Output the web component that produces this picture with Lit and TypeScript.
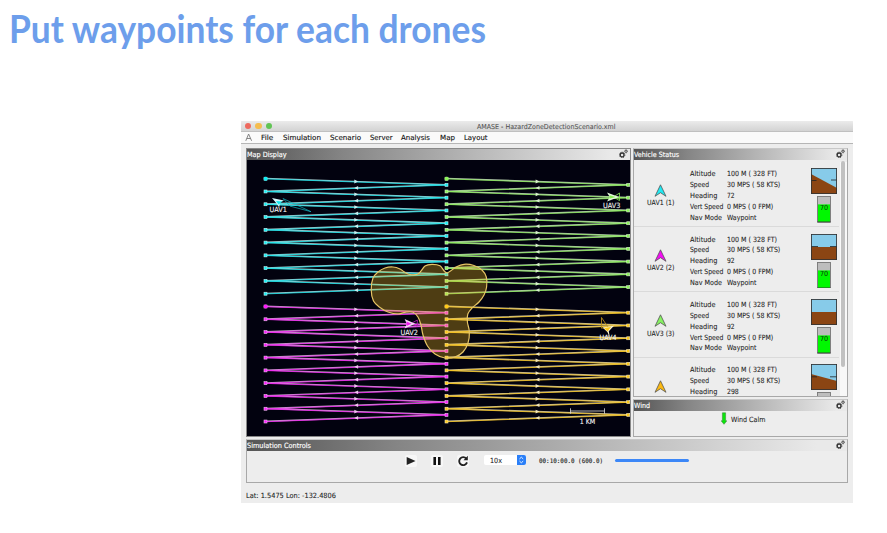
import { LitElement, html, svg, css, nothing } from "lit";
import { customElement } from "lit/decorators.js";

/** A line of small text set to a fixed advance width. */
const label = (text: string, width: number, cls = "", size = 7.2) => html`<svg
  class="label ${cls}" width=${width} height="10" viewBox="0 0 ${width} 10">
  <text x="0" y="7.6" font-size=${size} textLength=${width} lengthAdjust="spacingAndGlyphs">${text}</text>
</svg>`;

const gears = html`<svg class="gears" width="9" height="9" viewBox="0 0 9 9">
  <circle cx="3.1" cy="5.9" r="1.9" fill="none" stroke="#333" stroke-width="1.3"/>
  <circle cx="3.1" cy="5.9" r="2.8" fill="none" stroke="#333" stroke-width=".7" stroke-dasharray="1.2 1"/>
  <circle cx="7" cy="2.3" r="1.1" fill="none" stroke="#444" stroke-width=".9"/>
  <circle cx="7" cy="2.3" r="1.7" fill="none" stroke="#444" stroke-width=".5" stroke-dasharray=".8 .7"/>
</svg>`;

const STEP = 12.78;

interface Route { id: string; x1: number; x2: number; y: number; color: string; pale: string }
const routes: Route[] = [
  { id: "r1", x1: 265.6, x2: 446.6, y: 178.7, color: "#12eef4", pale: "#c6eff0" },
  { id: "r2", x1: 446.6, x2: 628.3, y: 178.7, color: "#8cf45a", pale: "#d6efca" },
  { id: "r3", x1: 265.6, x2: 446.6, y: 306.5, color: "#fb1cfb", pale: "#efc2f0" },
  { id: "r4", x1: 446.6, x2: 628.3, y: 306.5, color: "#ffca18", pale: "#f3e6b8" },
];

function drawRoute(r: Route) {
  const pts: [number, number][] = [];
  for (let i = 0; i < 10; i++) {
    pts.push([r.x1, r.y + i * STEP]);
    if (i < 9) pts.push([r.x2, r.y + 6.2 + i * STEP]);
  }
  const line = pts.map((p) => p.join(",")).join(" ");
  const mid = (r.x1 + r.x2) / 2;
  return svg`
    <polyline points=${line} fill="none" stroke=${r.pale} stroke-width="1.4" opacity=".8" transform="translate(0 -.3)"/>
    <polyline points=${line} fill="none" stroke=${r.color} stroke-width="1" opacity=".75" transform="translate(0 .2)"/>
    ${pts.slice(1).map((p, i) => {
      const y = (p[1] + pts[i][1]) / 2 - 0.3;
      const d = i % 2 === 0
        ? `M${mid - 1.8} ${y - 1.9}l3.8 1.9l-3.8 1.9z`
        : `M${mid + 2} ${y - 1.9}l-3.8 1.9l3.8 1.9z`;
      return svg`<path d=${d} fill=${r.pale}/>`;
    })}
    ${pts.map((p) => svg`<rect x=${p[0] - 1.6} y=${p[1] - 1.5} width="3" height="3" fill=${r.color} stroke=${r.pale} stroke-width=".6"/>`)}
    <circle cx=${r.x1} cy=${r.y} r="2" fill=${r.color}/>`;
}

const zone: [number, number][] = [
  [371.2, 290], [373, 278], [378, 272], [385, 268], [393, 267], [400, 269], [408, 274], [418, 274],
  [425, 266], [432, 264.3], [440, 265.8], [446.6, 272.8], [456, 267], [464, 264.3], [474, 265.5],
  [482, 270], [486.3, 277], [486.6, 287], [484, 295], [479, 302], [472, 308], [467.8, 314],
  [467.4, 322], [469.4, 332], [468, 343], [463, 352], [455, 357], [445, 358], [435, 354],
  [427.5, 346], [423, 335], [421, 325], [418, 317], [413, 312.3], [405, 312.3], [398, 314],
  [388, 312], [380, 307.5], [373.5, 301],
];

/** Closed Catmull-Rom curve through the zone's corners. */
function smooth(p: [number, number][]) {
  const n = p.length;
  let d = `M${p[0]}`;
  for (let i = 0; i < n; i++) {
    const a = p[(i + n - 1) % n], b = p[i], c = p[(i + 1) % n], e = p[(i + 2) % n];
    d += `C${b[0] + (c[0] - a[0]) / 6} ${b[1] + (c[1] - a[1]) / 6} ${c[0] - (e[0] - b[0]) / 6} ${c[1] - (e[1] - b[1]) / 6} ${c[0]} ${c[1]}`;
  }
  return d + "z";
}

const mapText = (t: string, x: number, y: number, w: number) =>
  svg`<text x=${x} y=${y} font-size="7.2" fill="#f2f2f2" stroke="#f2f2f2" stroke-width=".12" textLength=${w} lengthAdjust="spacingAndGlyphs">${t}</text>`;

@customElement("mission-map")
class MissionMap extends LitElement {
  static styles = css`
    :host { display: block; flex: 1; background: #02020f; }
    svg { display: block; font-family: "DejaVu Sans", sans-serif; }
  `;
  render() {
    return html`<svg width="383" height="276" viewBox="247 160 383 276">
      ${routes.map(drawRoute)}
      <path d=${smooth(zone)} fill="#ffc81e" fill-opacity=".3" stroke="#e6c565" stroke-width="1.2"/>
      <path d="M283 198.5l28 13.2l-21-5.6z" fill="none" stroke="#12b4c0" stroke-width=".7"/>
      <path d="M272 198l12 2.600l-4 2l-.8 4.600l-2.600-3.600z" fill="#d6f7fa"/>
      <path d="M276 201l6.500 .4l-4 3z" fill="#12e6ee"/>
      ${mapText("UAV1", 269.5, 212.2, 17.5)}
      <path d="M619.5 193v7.6l-6-3.6z" fill="none" stroke="#86ee55" stroke-width=".8"/>
      <path d="M607 192.4l12 4.6l-12 4.6l2.8-4.6z" fill="#e4f8da"/>
      <path d="M609.5 195.2l6 1.8l-6 1.8z" fill="#86ee55"/>
      ${mapText("UAV3", 603, 207.8, 17.5)}
      <path d="M417.3 320v6l-7-2z" fill="none" stroke="#b316b3" stroke-width=".9"/>
      <path d="M404.6 319l10.600 4.700l-10.600 4.700l2.200-4.700z" fill="#f6d9f6"/>
      <path d="M406.500 321.500l5 2.200l-5 2.200z" fill="#f41cf4"/>
      ${mapText("UAV2", 400.5, 334.6, 17.5)}
      <path d="M601.5 317.5l6.500 9.700l-6.500 1z" fill="none" stroke="#b48a1a" stroke-width=".9"/>
      ${mapText("UAV4", 599.5, 339.6, 17)}
      <path d="M602.500 327.500l11.500-1.700l-5.200 5.400l1 6l-2.400-5.200z" fill="#fbf3d2"/>
      <path d="M604 328l7-1l-3.500 4.500z" fill="#fbc71b"/>
      <path d="M570.5 408.300v5.400M604.5 408.300v5.400M570.5 411h34" stroke="#ddd" stroke-width=".8" fill="none"/>
      ${mapText("1 KM", 579.7, 423.6, 15.6)}
    </svg>`;
  }
}

interface Vehicle { name: string; color: string; heading: string; hw: number; ground: string; line: string; partial?: boolean }
const vehicles: Vehicle[] = [
  { name: "UAV1 (1)", color: "#1fe9f2", heading: "72", hw: 7.6, ground: "0,6 26,20 26,26 0,26", line: "M0 12.5h5.5M20 12h6" },
  { name: "UAV2 (2)", color: "#f30cf3", heading: "92", hw: 7.6, ground: "0,13 26,13 26,26 0,26", line: "M0 12.5h7M19 12.5h7" },
  { name: "UAV3 (3)", color: "#86f261", heading: "92", hw: 7.6, ground: "0,13 26,13 26,26 0,26", line: "" },
  { name: "UAV4 (4)", color: "#fbb912", heading: "298", hw: 11.8, ground: "0,10 26,17 26,26 0,26", line: "M0 12.8h6M19 12.8h7", partial: true },
];

@customElement("vehicle-row")
class VehicleRow extends LitElement {
  static properties = { vehicle: { attribute: false } };
  declare vehicle: Vehicle;
  static styles = css`
    :host { display: flex; box-sizing: border-box; height: 65.4px; width: 205px; flex: none; border-bottom: 1px solid #dadada; font-family: "DejaVu Sans", sans-serif; }
    .label { display: block; overflow: visible; fill: #1c1c1c; stroke: #1c1c1c; stroke-width: .08; }
    .who { width: 53px; display: flex; flex-direction: column; align-items: center; padding-top: 22px; }
    .who .label { margin-top: .3px; }
    .data { display: grid; grid-template-columns: 37px 60px; grid-auto-rows: 10.85px; padding-top: 6.7px; margin-left: 3px; width: 121px; box-sizing: border-box; }
    .dials { display: flex; flex-direction: column; align-items: center; gap: 2px; width: 26px; padding-top: 6.8px; }
    .dials svg { display: block; flex: none; }
  `;
  render() {
    const v = this.vehicle;
    return html`
      <div class="who">
        <svg width="13" height="13" viewBox="0 0 13 13"><path d="M6.5 .8L12 12.3L6.5 8.7L1 12.3z" fill=${v.color} stroke="#555" stroke-width=".8"/></svg>
        ${v.partial ? nothing : label(v.name, 27.5)}
      </div>
      <div class="data">
        ${label("Altitude", 25.5)}${label("100 M ( 328 FT)", 50)}
        ${label("Speed", 19)}${label("30 MPS ( 58 KTS)", 53.3)}
        ${label("Heading", 27.5)}${label(v.heading, v.hw)}
        ${v.partial ? nothing : html`
          ${label("Vert Speed", 33.5)}${label("0 MPS ( 0 FPM)", 46.3)}
          ${label("Nav Mode", 32)}${label("Waypoint", 29.5)}`}
      </div>
      <div class="dials">
        <svg width="26" height="26" viewBox="0 0 26 26">
          <rect width="26" height="26" fill="#87cbe9"/>
          <polygon points=${v.ground} fill="#8b4513"/>
          <path d=${v.line} stroke="#222" stroke-width=".8"/>
          <rect x=".4" y=".4" width="25.2" height="25.2" fill="none" stroke="#333" stroke-width=".9"/>
        </svg>
        <svg width="14" height="26.5" viewBox="0 0 14 26.5">
          <rect x=".5" y=".5" width="13" height="25.5" fill="#bdbdbd" stroke="#777" stroke-width=".9"/>
          ${v.partial ? nothing : svg`
            <rect x="1" y="8.4" width="12" height="17.4" fill="#00f800"/>
            <path d="M.5 26h13" stroke="#222" stroke-width=".8"/>
            <text x="3" y="14" font-size="7" fill="#0c360c" textLength="8.2" lengthAdjust="spacingAndGlyphs">70</text>`}
        </svg>
      </div>`;
  }
}

@customElement("app-root")
class AppRoot extends LitElement {
  static styles = css`
    :host { display: block; box-sizing: border-box; width: 887px; height: 533px; background: #fff; overflow: hidden; font-family: "DejaVu Sans", sans-serif; }
    .heading { display: block; width: 500px; height: 60px; font-family: Lato, sans-serif; font-weight: 700; fill: #6d9eeb; }
    .window { margin: 61px 0 0 241px; width: 612px; height: 382px; background: #ededed; display: flex; flex-direction: column; }
    .label { display: block; overflow: visible; fill: #1c1c1c; stroke: #1c1c1c; stroke-width: .08; flex: none; }
    .titlebar { height: 11px; flex: none; display: flex; align-items: center; background: linear-gradient(#ebebeb, #d3d3d3); border-bottom: 1px solid #c0c0c0; border-radius: 2px 2px 0 0; box-sizing: border-box; }
    .dots { display: flex; gap: 4px; padding-left: 4px; width: 232px; }
    .dot { width: 6.4px; height: 6.4px; border-radius: 50%; }
    .red { background: #ee6a5f; }
    .amber { background: #f5bd4f; }
    .green { background: #61c454; }
    .grey { fill: #555; stroke: #555; }
    .menu { height: 12px; flex: none; background: #fafafa; border-bottom: 1px solid #b6b6b6; box-sizing: border-box; display: flex; align-items: center; padding: 0 0 1px 4px; }
    .menu .label { fill: #111; stroke: #111; stroke-width: .12; }
    .main { display: flex; gap: 2px; height: 289px; margin: 4px 5px 0; flex: none; }
    .side { display: flex; flex-direction: column; gap: 2px; flex: 1; }
    .panel { display: flex; flex-direction: column; box-sizing: border-box; border: 1px solid #a8a8a8; border-top-color: #c8c8c8; overflow: hidden; background: #ededed; }
    .map { width: 385px; flex: none; border-color: #888; }
    .vehicles { height: 249px; }
    .wind { flex: 1; }
    .bar { height: 11px; flex: none; display: flex; align-items: center; justify-content: space-between; box-sizing: border-box; padding: 0 2px 1.4px 0; background: linear-gradient(90deg, #555 0, #858585 25%, #b8b8b8 60%, #e9e9e9 95%); }
    .bar .label { fill: #fff; stroke: #fff; stroke-width: .15; }
    .gears { display: block; }
    .list { flex: 1; min-height: 0; display: flex; justify-content: space-between; overflow: hidden; padding-top: 1.5px; }
    .rows { display: flex; flex-direction: column; }
    .track { width: 7px; background: #f8f8f8; }
    .thumb { width: 3.8px; height: 206px; margin: -1px 0 0 1.2px; border-radius: 2px; background: #c1c1c1; }
    .calm { display: flex; align-items: center; gap: 3.5px; padding: 1px 0 0 87px; }
    .sim { height: 44px; margin: 2px 5px 0; flex: none; }
    .controls { display: flex; align-items: center; padding: 1.5px 0 0 158px; height: 16px; }
    .button { width: 12px; height: 12px; background: #f7f7f7; border-radius: 2px; margin-right: 13.8px; display: block; flex: none; }
    .select { display: flex; align-items: center; justify-content: space-between; width: 42px; height: 10px; border-radius: 2px; background: #fff; box-sizing: border-box; padding-left: 6.5px; margin: -1px 13px 0 1.6px; overflow: hidden; }
    .stepper { display: block; background: #2a7ff8; }
    .mono { font-family: "DejaVu Sans Mono", monospace; stroke-width: .12; margin-top: -1.5px; }
    .progress { width: 74.5px; height: 3px; border-radius: 2px; background: #3c87f7; margin: -1px 0 0 12px; }
    .status { padding: 6.8px 0 0 5px; }
  `;

  render() {
    const menu: [string, number, number][] = [
      ["File", 12.3, 9.3], ["Simulation", 38, 9], ["Scenario", 31, 9], ["Server", 22.5, 9],
      ["Analysis", 29, 9.3], ["Map", 15, 9.3], ["Layout", 23.5, 0],
    ];
    return html`
      <svg class="heading" viewBox="0 0 500 60">
        <text x="9" y="43" font-size="37.5" textLength="477" lengthAdjust="spacingAndGlyphs">Put waypoints for each drones</text>
      </svg>
      <div class="window">
        <div class="titlebar">
          <div class="dots"><i class="dot red"></i><i class="dot amber"></i><i class="dot green"></i></div>
          ${label("AMASE - HazardZoneDetectionScenario.xml", 138.5, "grey", 6.8)}
        </div>
        <div class="menu">
          <svg width="16.3" height="9" viewBox="0 0 16.3 9"><path d="M.8 7.8L3.6 1L6.6 7.8M1.8 5.5h3.8" fill="none" stroke="#777" stroke-width=".9"/></svg>
          ${menu.map(([t, w, gap]) => html`${label(t, w)}<svg width=${gap} height="1"></svg>`)}
        </div>
        <div class="main">
          <div class="panel map">
            <div class="bar">${label("Map Display", 39.5)}${gears}</div>
            <mission-map></mission-map>
          </div>
          <div class="side">
            <div class="panel vehicles">
              <div class="bar">${label("Vehicle Status", 45)}${gears}</div>
              <div class="list">
                <div class="rows">${vehicles.map((v) => html`<vehicle-row .vehicle=${v}></vehicle-row>`)}</div>
                <div class="track"><div class="thumb"></div></div>
              </div>
            </div>
            <div class="panel wind">
              <div class="bar">${label("Wind", 16)}${gears}</div>
              <div class="calm">
                <svg width="6" height="13" viewBox="0 0 6 13"><path d="M1.4 .8h3.200v8h1.300L3 12.300L.1 8.800h1.300z" fill="#0be60b" stroke="#3a7a3a" stroke-width=".5"/></svg>
                ${label("Wind Calm", 34.5)}
              </div>
            </div>
          </div>
        </div>
        <div class="panel sim">
          <div class="bar">${label("Simulation Controls", 64)}${gears}</div>
          <div class="controls">
            <svg class="button" viewBox="0 0 12 12"><path d="M1.7 2L10.5 6L1.7 10z" fill="#222"/></svg>
            <svg class="button" viewBox="0 0 12 12"><path d="M2.4 2h2.600v8H2.4zM7 2h2.600v8H7z" fill="#111"/></svg>
            <svg class="button" viewBox="0 0 12 12"><path d="M9.3 3.600A4 4 0 1 0 10 7.400" fill="none" stroke="#222" stroke-width="1.9"/><path d="M10.800 .8v4.500H6.500z" fill="#222"/></svg>
            <div class="select">${label("10x", 12)}
              <svg class="stepper" width="8.7" height="10" viewBox="0 0 8.7 10"><path d="M2.5 3.9L4.35 2.2L6.2 3.9M2.5 6.1L4.35 7.8L6.2 6.1" fill="none" stroke="#fff" stroke-width=".9"/></svg>
            </div>
            ${label("00:10:00.0 (600.0)", 64, "mono", 6.2)}
            <div class="progress"></div>
          </div>
        </div>
        <div class="status">${label("Lat: 1.5475 Lon: -132.4806", 90)}</div>
      </div>`;
  }
}
